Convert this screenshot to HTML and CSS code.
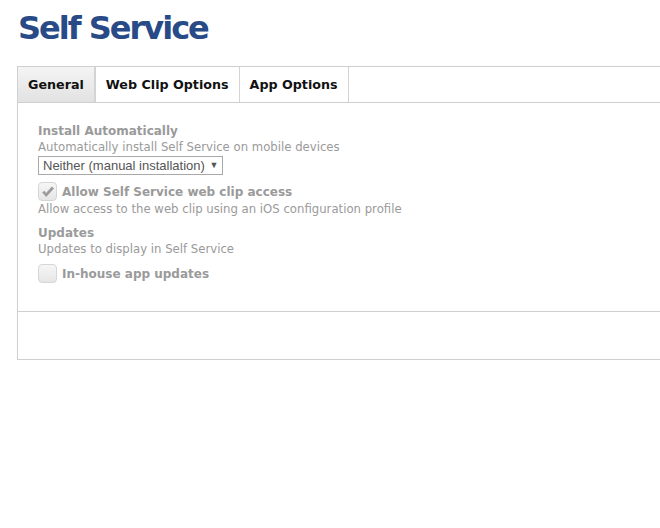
FILE: index.html
```html
<!DOCTYPE html>
<html lang="en">
<head>
    <meta charset="UTF-8">
    <title>Self Service</title>
    <link rel="stylesheet" href="styles.css">
</head>
<body>
    <h1 class="title">Self Service</h1>
    <div class="panel">
        <div class="tabs">
            <div class="tab active">General</div>
            <div class="tab">Web Clip Options</div>
            <div class="tab">App Options</div>
        </div>
        <div class="content">
            <div class="field">
                <div class="label">Install Automatically</div>
                <div class="desc">Automatically install Self Service on mobile devices</div>
                <div class="select">Neither (manual installation) <span class="arrow">&#9660;</span></div>
            </div>
            <div class="field">
                <div class="check-row">
                    <span class="checkbox">
                        <svg width="14" height="14" viewBox="0 0 14 14"><path d="M1.2 7.6 L5.2 12 L13 3.4 L10.8 1.4 L5.1 7.9 L3.4 5.8 Z" fill="#9c9c9c"/></svg>
                    </span>
                    <span class="label">Allow Self Service web clip access</span>
                </div>
                <div class="desc">Allow access to the web clip using an iOS configuration profile</div>
            </div>
            <div class="field">
                <div class="label">Updates</div>
                <div class="desc">Updates to display in Self Service</div>
                <div class="check-row">
                    <span class="checkbox"></span>
                    <span class="label">In-house app updates</span>
                </div>
            </div>
        </div>
        <div class="footer"></div>
    </div>
</body>
</html>
```

FILE: styles.css
```css
*{
    margin: 0;
    padding: 0;
    box-sizing: border-box;
}
body{
    font-family: "DejaVu Sans", Verdana, sans-serif;
    background: #fff;
    padding: 10px 0 0 17px;
    overflow: hidden;
}
.title{
    font-size: 32px;
    letter-spacing: -2px;
    font-weight: bold;
    color: #284a87;
    line-height: 36px;
    margin-left: 1px;
    margin-bottom: 20px;
}
.panel{
    border: 1px solid #cfcfcf;
    border-right: none;
}
.tabs{
    display: flex;
    height: 36px;
    border-bottom: 1px solid #cfcfcf;
}
.tab{
    font-size: 12.7px;
    font-weight: bold;
    color: #111;
    padding: 0 10px;
    line-height: 35px;
    border-right: 1px solid #d4d4d4;
}
.tab.active{
    background: linear-gradient(#f4f4f4, #e2e2e2);
    border-right: 2px solid #d4d4d4;
}
.content{
    padding: 20px 20px 25px 20px;
    height: 209px;
    border-bottom: 1px solid #cfcfcf;
}
.field{
    margin-bottom: 8px;
}
.field:first-child{
    margin-bottom: 7px;
}
.label{
    font-size: 12px;
    font-weight: bold;
    color: #9a9a9a;
    line-height: 16px;
}
.desc{
    font-size: 11.7px;
    color: #9a9a9a;
    line-height: 16px;
}
.select{
    display: inline-block;
    margin-top: 1px;
    border: 1px solid #a9a9a9;
    font-family: "Liberation Sans", Arial, sans-serif;
    font-size: 13px;
    color: #555;
    line-height: 17px;
    padding: 0 4px;
}
.arrow{
    font-size: 9px;
    vertical-align: 2px;
    margin-left: 1px;
}
.check-row{
    display: flex;
    align-items: center;
    gap: 5px;
    margin-top: 7px;
}
.checkbox{
    width: 19px;
    height: 19px;
    border: 1px solid #d6d6d6;
    border-radius: 4px;
    background: linear-gradient(#f6f6f6, #e6e6e6);
    display: flex;
    align-items: center;
    justify-content: center;
}
.footer{
    height: 47px;
}
```
